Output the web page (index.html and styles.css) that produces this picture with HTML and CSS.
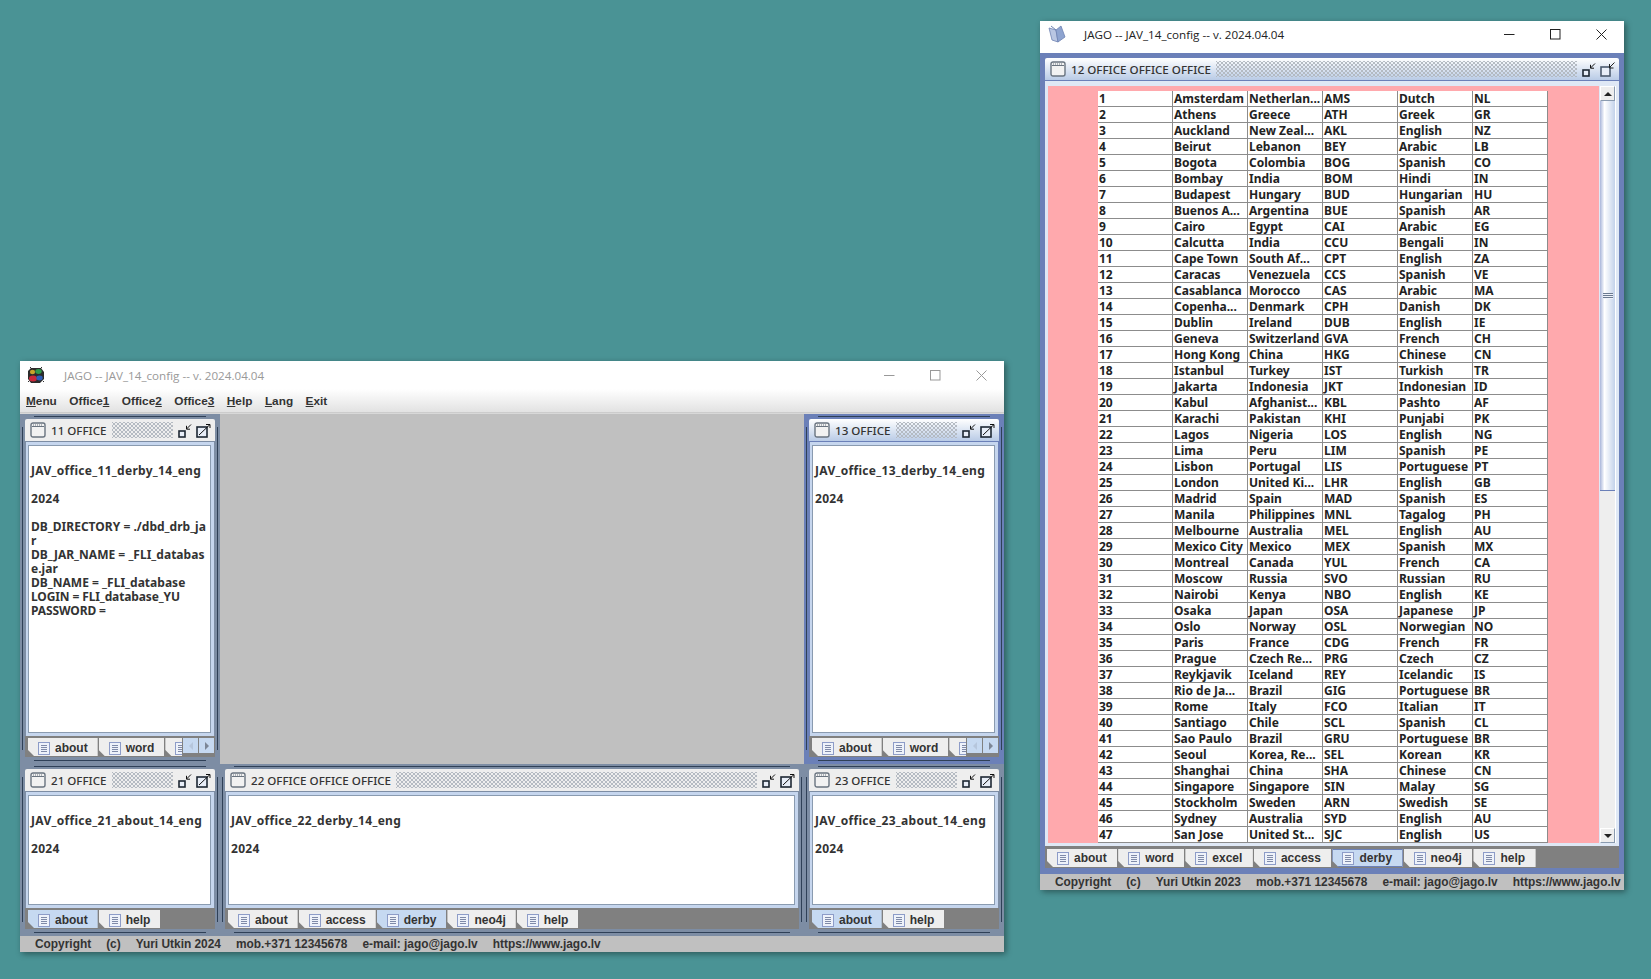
FILE: index.html
```html
<!DOCTYPE html>
<html lang="en">
<head>
<meta charset="utf-8">
<title>JAGO</title>
<link rel="stylesheet" href="styles.css">
</head>
<body>
<svg class="defs" width="0" height="0" aria-hidden="true">
  <symbol id="i-frame" viewBox="0 0 16 16"><rect x="1" y="1" width="14" height="14" rx="2" fill="#f2f2f2" stroke="#6a7480" stroke-width="1.4"/><path d="M2 4.5h12" stroke="#6a7480"/><path d="M3 3h10" stroke="#6a7480" stroke-dasharray="1 1"/></symbol>
  <symbol id="i-doc" viewBox="0 0 12 13"><rect x=".5" y=".5" width="11" height="12" fill="#eef2fa" stroke="#8d9cc8"/><path d="M3 3.5h6M3 5.5h6M3 7.5h6M3 9.5h6" stroke="#7f8aa8"/></symbol>
  <symbol id="i-min" viewBox="0 0 14 15"><rect x="1" y="8" width="6" height="6" fill="#e8eef8" stroke="#1d2733" stroke-width="1.6"/><path d="M13 1.5 8.5 6M8.5 2.8V6.2H12" fill="none" stroke="#111"/></symbol>
  <symbol id="i-max" viewBox="0 0 15 15"><rect x="1" y="4" width="10" height="10" fill="#e8eef8" stroke="#1d2733" stroke-width="1.6"/><path d="M3 12 14 1.5M10 1.5h4V5" fill="none" stroke="#111"/></symbol>
  <symbol id="i-rest" viewBox="0 0 15 15"><rect x="1" y="5" width="9" height="9" fill="#e8eef8" stroke="#4c5a6e" stroke-width="1.6"/><path d="M14.5 .5 9.5 5.5M9.5 2V6H13.5" fill="none" stroke="#222"/></symbol>
</svg>

<section class="window win-left">
  <header class="oshead oshead-dim">
    <svg class="appicon" width="18" height="18" viewBox="0 0 18 18"><path d="M4 2h10l3 4v7l-4 4H4l-3-4V5z" fill="#2b2b2b"/><ellipse cx="6" cy="12.5" rx="4" ry="3" fill="#c9283a"/><ellipse cx="12.5" cy="12" rx="3.2" ry="2.4" fill="#2e5db8"/><ellipse cx="11.5" cy="5.5" rx="3.2" ry="2.4" fill="#2f9a4a"/><ellipse cx="5.5" cy="6" rx="2.6" ry="2.2" fill="#c9a42a"/><path d="M3 1h1v1H3zM14 1h1v1h-1zM16 15h1v1h-1zM1 15h1v1H1z" fill="#333"/></svg>
    <span class="ostitle">JAGO -- JAV_14_config -- v. 2024.04.04</span>
    <span class="oscontrols">
      <svg width="11" height="11" viewBox="0 0 11 11"><path d="M0 5.5h10.5" stroke="currentColor"/></svg>
      <svg width="11" height="11" viewBox="0 0 11 11"><rect x=".5" y=".5" width="9.5" height="9.5" fill="none" stroke="currentColor"/></svg>
      <svg width="11" height="11" viewBox="0 0 11 11"><path d="M.5.5l10 10M10.5.5l-10 10" stroke="currentColor"/></svg>
    </span>
  </header>
  <nav class="menubar">
    <span><u>M</u>enu</span><span>Office<u>1</u></span><span>Office<u>2</u></span><span>Office<u>3</u></span><span><u>H</u>elp</span><span><u>L</u>ang</span><span><u>E</u>xit</span>
  </nav>
  <div class="desk">
    <article class="frame f-a">
      <div class="ftitle"><svg class="ficon"><use href="#i-frame"/></svg><span class="fname">11 OFFICE</span><span class="dots"></span><svg class="fbtn"><use href="#i-min"/></svg><svg class="fbtn"><use href="#i-max"/></svg></div>
      <div class="panel"><div class="textbox">JAV_office_11_derby_14_eng<br><br>2024<br><br><span class="caps">DB_DIRECTORY = ./dbd_drb_ja<br>r<br>DB_JAR_NAME = _FLI_databas<br>e.jar<br>DB_NAME = _FLI_database</span><br><span class="caps-x">LOGIN = FLI_database_YU<br>PASSWORD =</span></div></div>
      <div class="tabs"><div class="tabstrip"><span class="tab"><svg class="docicon"><use href="#i-doc"/></svg>about</span><span class="tab"><svg class="docicon"><use href="#i-doc"/></svg>word</span><span class="tab"><svg class="docicon"><use href="#i-doc"/></svg></span></div><span class="scrollbtn"><i class="arrow-l"></i></span><span class="scrollbtn"><i class="arrow-r"></i></span></div>
    </article>
    <article class="frame f-a f-active f-col3">
      <div class="ftitle"><svg class="ficon"><use href="#i-frame"/></svg><span class="fname">13 OFFICE</span><span class="dots"></span><svg class="fbtn"><use href="#i-min"/></svg><svg class="fbtn"><use href="#i-max"/></svg></div>
      <div class="panel"><div class="textbox">JAV_office_13_derby_14_eng<br><br>2024</div></div>
      <div class="tabs"><div class="tabstrip"><span class="tab"><svg class="docicon"><use href="#i-doc"/></svg>about</span><span class="tab"><svg class="docicon"><use href="#i-doc"/></svg>word</span><span class="tab"><svg class="docicon"><use href="#i-doc"/></svg></span></div><span class="scrollbtn"><i class="arrow-l"></i></span><span class="scrollbtn"><i class="arrow-r"></i></span></div>
    </article>
    <article class="frame">
      <div class="ftitle"><svg class="ficon"><use href="#i-frame"/></svg><span class="fname">21 OFFICE</span><span class="dots"></span><svg class="fbtn"><use href="#i-min"/></svg><svg class="fbtn"><use href="#i-max"/></svg></div>
      <div class="panel"><div class="textbox">JAV_office_21_about_14_eng<br><br>2024</div></div>
      <div class="tabs"><div class="tabstrip"><span class="tab sel"><svg class="docicon"><use href="#i-doc"/></svg>about</span><span class="tab"><svg class="docicon"><use href="#i-doc"/></svg>help</span></div></div>
    </article>
    <article class="frame">
      <div class="ftitle"><svg class="ficon"><use href="#i-frame"/></svg><span class="fname">22 OFFICE OFFICE OFFICE</span><span class="dots"></span><svg class="fbtn"><use href="#i-min"/></svg><svg class="fbtn"><use href="#i-max"/></svg></div>
      <div class="panel"><div class="textbox">JAV_office_22_derby_14_eng<br><br>2024</div></div>
      <div class="tabs"><div class="tabstrip"><span class="tab"><svg class="docicon"><use href="#i-doc"/></svg>about</span><span class="tab"><svg class="docicon"><use href="#i-doc"/></svg>access</span><span class="tab sel"><svg class="docicon"><use href="#i-doc"/></svg>derby</span><span class="tab"><svg class="docicon"><use href="#i-doc"/></svg>neo4j</span><span class="tab"><svg class="docicon"><use href="#i-doc"/></svg>help</span></div></div>
    </article>
    <article class="frame">
      <div class="ftitle"><svg class="ficon"><use href="#i-frame"/></svg><span class="fname">23 OFFICE</span><span class="dots"></span><svg class="fbtn"><use href="#i-min"/></svg><svg class="fbtn"><use href="#i-max"/></svg></div>
      <div class="panel"><div class="textbox">JAV_office_23_about_14_eng<br><br>2024</div></div>
      <div class="tabs"><div class="tabstrip"><span class="tab sel"><svg class="docicon"><use href="#i-doc"/></svg>about</span><span class="tab"><svg class="docicon"><use href="#i-doc"/></svg>help</span></div></div>
    </article>
  </div>
  <footer class="status"><span>Copyright</span><span>(c)</span><span>Yuri Utkin 2024</span><span>mob.+371 12345678</span><span>e-mail: jago@jago.lv</span><span>https://www.jago.lv</span></footer>
</section>

<section class="window win-right">
  <header class="oshead oshead-right">
    <svg class="appicon book" width="18" height="18" viewBox="0 0 18 18"><path d="M1 3l7 2 2 12-6-2z" fill="#b9c6e2" stroke="#6f83b2" stroke-width=".8"/><path d="M8 5l5-4 4 11-7 5z" fill="#8ea4d0" stroke="#6f83b2" stroke-width=".8"/><path d="M3 1l5 4" stroke="#6f83b2"/></svg>
    <span class="ostitle">JAGO -- JAV_14_config -- v. 2024.04.04</span>
    <span class="oscontrols">
      <svg width="11" height="11" viewBox="0 0 11 11"><path d="M0 5.5h10.5" stroke="currentColor"/></svg>
      <svg width="11" height="11" viewBox="0 0 11 11"><rect x=".5" y=".5" width="9.5" height="9.5" fill="none" stroke="currentColor"/></svg>
      <svg width="11" height="11" viewBox="0 0 11 11"><path d="M.5.5l10 10M10.5.5l-10 10" stroke="currentColor"/></svg>
    </span>
  </header>
  <div class="bigframe">
    <div class="ftitle ftitle-big"><svg class="ficon"><use href="#i-frame"/></svg><span class="fname">12 OFFICE OFFICE OFFICE</span><span class="dots"></span><svg class="fbtn"><use href="#i-min"/></svg><svg class="fbtn"><use href="#i-rest"/></svg></div>
    <div class="bigpanel">
      <div class="pink">
        <table class="cities">
          <tr><td>1</td><td>Amsterdam</td><td>Netherlan...</td><td>AMS</td><td>Dutch</td><td>NL</td></tr>
          <tr><td>2</td><td>Athens</td><td>Greece</td><td>ATH</td><td>Greek</td><td>GR</td></tr>
          <tr><td>3</td><td>Auckland</td><td>New Zeal...</td><td>AKL</td><td>English</td><td>NZ</td></tr>
          <tr><td>4</td><td>Beirut</td><td>Lebanon</td><td>BEY</td><td>Arabic</td><td>LB</td></tr>
          <tr><td>5</td><td>Bogota</td><td>Colombia</td><td>BOG</td><td>Spanish</td><td>CO</td></tr>
          <tr><td>6</td><td>Bombay</td><td>India</td><td>BOM</td><td>Hindi</td><td>IN</td></tr>
          <tr><td>7</td><td>Budapest</td><td>Hungary</td><td>BUD</td><td>Hungarian</td><td>HU</td></tr>
          <tr><td>8</td><td>Buenos A...</td><td>Argentina</td><td>BUE</td><td>Spanish</td><td>AR</td></tr>
          <tr><td>9</td><td>Cairo</td><td>Egypt</td><td>CAI</td><td>Arabic</td><td>EG</td></tr>
          <tr><td>10</td><td>Calcutta</td><td>India</td><td>CCU</td><td>Bengali</td><td>IN</td></tr>
          <tr><td>11</td><td>Cape Town</td><td>South Af...</td><td>CPT</td><td>English</td><td>ZA</td></tr>
          <tr><td>12</td><td>Caracas</td><td>Venezuela</td><td>CCS</td><td>Spanish</td><td>VE</td></tr>
          <tr><td>13</td><td>Casablanca</td><td>Morocco</td><td>CAS</td><td>Arabic</td><td>MA</td></tr>
          <tr><td>14</td><td>Copenha...</td><td>Denmark</td><td>CPH</td><td>Danish</td><td>DK</td></tr>
          <tr><td>15</td><td>Dublin</td><td>Ireland</td><td>DUB</td><td>English</td><td>IE</td></tr>
          <tr><td>16</td><td>Geneva</td><td>Switzerland</td><td>GVA</td><td>French</td><td>CH</td></tr>
          <tr><td>17</td><td>Hong Kong</td><td>China</td><td>HKG</td><td>Chinese</td><td>CN</td></tr>
          <tr><td>18</td><td>Istanbul</td><td>Turkey</td><td>IST</td><td>Turkish</td><td>TR</td></tr>
          <tr><td>19</td><td>Jakarta</td><td>Indonesia</td><td>JKT</td><td>Indonesian</td><td>ID</td></tr>
          <tr><td>20</td><td>Kabul</td><td>Afghanist...</td><td>KBL</td><td>Pashto</td><td>AF</td></tr>
          <tr><td>21</td><td>Karachi</td><td>Pakistan</td><td>KHI</td><td>Punjabi</td><td>PK</td></tr>
          <tr><td>22</td><td>Lagos</td><td>Nigeria</td><td>LOS</td><td>English</td><td>NG</td></tr>
          <tr><td>23</td><td>Lima</td><td>Peru</td><td>LIM</td><td>Spanish</td><td>PE</td></tr>
          <tr><td>24</td><td>Lisbon</td><td>Portugal</td><td>LIS</td><td>Portuguese</td><td>PT</td></tr>
          <tr><td>25</td><td>London</td><td>United Ki...</td><td>LHR</td><td>English</td><td>GB</td></tr>
          <tr><td>26</td><td>Madrid</td><td>Spain</td><td>MAD</td><td>Spanish</td><td>ES</td></tr>
          <tr><td>27</td><td>Manila</td><td>Philippines</td><td>MNL</td><td>Tagalog</td><td>PH</td></tr>
          <tr><td>28</td><td>Melbourne</td><td>Australia</td><td>MEL</td><td>English</td><td>AU</td></tr>
          <tr><td>29</td><td>Mexico City</td><td>Mexico</td><td>MEX</td><td>Spanish</td><td>MX</td></tr>
          <tr><td>30</td><td>Montreal</td><td>Canada</td><td>YUL</td><td>French</td><td>CA</td></tr>
          <tr><td>31</td><td>Moscow</td><td>Russia</td><td>SVO</td><td>Russian</td><td>RU</td></tr>
          <tr><td>32</td><td>Nairobi</td><td>Kenya</td><td>NBO</td><td>English</td><td>KE</td></tr>
          <tr><td>33</td><td>Osaka</td><td>Japan</td><td>OSA</td><td>Japanese</td><td>JP</td></tr>
          <tr><td>34</td><td>Oslo</td><td>Norway</td><td>OSL</td><td>Norwegian</td><td>NO</td></tr>
          <tr><td>35</td><td>Paris</td><td>France</td><td>CDG</td><td>French</td><td>FR</td></tr>
          <tr><td>36</td><td>Prague</td><td>Czech Re...</td><td>PRG</td><td>Czech</td><td>CZ</td></tr>
          <tr><td>37</td><td>Reykjavik</td><td>Iceland</td><td>REY</td><td>Icelandic</td><td>IS</td></tr>
          <tr><td>38</td><td>Rio de Ja...</td><td>Brazil</td><td>GIG</td><td>Portuguese</td><td>BR</td></tr>
          <tr><td>39</td><td>Rome</td><td>Italy</td><td>FCO</td><td>Italian</td><td>IT</td></tr>
          <tr><td>40</td><td>Santiago</td><td>Chile</td><td>SCL</td><td>Spanish</td><td>CL</td></tr>
          <tr><td>41</td><td>Sao Paulo</td><td>Brazil</td><td>GRU</td><td>Portuguese</td><td>BR</td></tr>
          <tr><td>42</td><td>Seoul</td><td>Korea, Re...</td><td>SEL</td><td>Korean</td><td>KR</td></tr>
          <tr><td>43</td><td>Shanghai</td><td>China</td><td>SHA</td><td>Chinese</td><td>CN</td></tr>
          <tr><td>44</td><td>Singapore</td><td>Singapore</td><td>SIN</td><td>Malay</td><td>SG</td></tr>
          <tr><td>45</td><td>Stockholm</td><td>Sweden</td><td>ARN</td><td>Swedish</td><td>SE</td></tr>
          <tr><td>46</td><td>Sydney</td><td>Australia</td><td>SYD</td><td>English</td><td>AU</td></tr>
          <tr><td>47</td><td>San Jose</td><td>United St...</td><td>SJC</td><td>English</td><td>US</td></tr>
        </table>
      </div>
      <div class="vscroll">
        <span class="vbtn"><i class="arrow-u"></i></span>
        <div class="vtrack"><div class="vthumb"><i class="grip"></i></div></div>
        <span class="vbtn"><i class="arrow-d"></i></span>
      </div>
    </div>
    <div class="tabs tabs-big"><div class="tabstrip"><span class="tab"><svg class="docicon"><use href="#i-doc"/></svg>about</span><span class="tab"><svg class="docicon"><use href="#i-doc"/></svg>word</span><span class="tab"><svg class="docicon"><use href="#i-doc"/></svg>excel</span><span class="tab"><svg class="docicon"><use href="#i-doc"/></svg>access</span><span class="tab sel sel-box"><svg class="docicon"><use href="#i-doc"/></svg>derby</span><span class="tab"><svg class="docicon"><use href="#i-doc"/></svg>neo4j</span><span class="tab"><svg class="docicon"><use href="#i-doc"/></svg>help</span></div></div>
  </div>
  <footer class="status"><span>Copyright</span><span>(c)</span><span>Yuri Utkin 2023</span><span>mob.+371 12345678</span><span>e-mail: jago@jago.lv</span><span>https://www.jago.lv</span></footer>
</section>
</body>
</html>
```
FILE: styles.css
```css
* { box-sizing: border-box; }
html, body { margin: 0; height: 979px; overflow: hidden; }
body { background: #4a9395; position: relative; font-family: "Liberation Sans", Arial, sans-serif; font-size: 12px; color: #333; }
.defs { position: absolute; }

.window { position: absolute; display: flex; flex-direction: column; box-shadow: 2px 2px 6px rgba(0,0,0,.4); }
.win-left { left: 20px; top: 361px; width: 984px; height: 591px; background: #d8d8d8; }
.win-right { left: 1040px; top: 21px; width: 584px; height: 869px; }

.oshead { height: 28px; background: #fff; display: flex; align-items: center; flex: none; color: #222; }
.oshead-dim { color: #999; }
.oshead-right { height: 32px; padding-bottom: 6px; }
.appicon { margin-left: 7px; flex: none; }
.book { margin-left: 8px; }
.ostitle { margin-left: 19px; font-family: "Open Sans", sans-serif; font-size: 11.65px; white-space: nowrap; }
.oshead-right .ostitle { margin-left: 18px; }
.oscontrols { margin-left: auto; margin-right: 17px; display: flex; gap: 35px; }

.menubar { height: 24px; flex: none; display: flex; gap: 12.5px; align-items: center; padding: 0 0 0 6px; background: linear-gradient(#fff, #e2e2e2); font-weight: bold; font-size: 11.8px; color: #333; border-bottom: 1px solid #ccc; }
.menubar span { white-space: nowrap; }

.desk { flex: 1; display: grid; grid-template-columns: 200px 1fr 200px; grid-template-rows: 350px 172px; background: #c0c0c0; margin-top: 1px; }
.f-col3 { grid-column: 3; }

.frame {
  --edge: #7d8da4;
  --line: #2f4057;
  display: flex; flex-direction: column; padding: 5px 5px 7px 5px;
  background:
    linear-gradient(var(--line), var(--line)) center 2px / calc(100% - 28px) 1px no-repeat,
    linear-gradient(var(--line), var(--line)) center calc(100% - 3px) / calc(100% - 28px) 1px no-repeat,
    linear-gradient(var(--line), var(--line)) 2px 13px / 1px calc(100% - 27px) no-repeat,
    linear-gradient(var(--line), var(--line)) calc(100% - 2px) 13px / 1px calc(100% - 27px) no-repeat,
    var(--edge);
}
.f-active { --edge: #6b80b8; }
.f-active .ftitle { background: linear-gradient(#fff, #b9cbe6); }

.ftitle { height: 22px; flex: none; display: flex; align-items: center; background: #eeeeee; border-radius: 2px 2px 0 0; padding: 0 4px 0 5px; margin-bottom: 1px; }
.ficon { width: 16px; height: 16px; flex: none; }
.fname { margin-left: 5px; font-family: "Noto Sans", sans-serif; font-weight: 500; font-size: 11.6px; white-space: nowrap; color: #333; }
.dots {
  flex: 1; height: 16px; margin: 0 1px 0 5px;
  background:
    radial-gradient(circle, #b3b9c1 .7px, transparent .9px) 0 0 / 4px 4px,
    radial-gradient(circle, #b3b9c1 .7px, transparent .9px) 2px 2px / 4px 4px;
}
.fbtn { width: 14px; height: 15px; flex: none; margin-left: 4px; }
.fbtn:last-child { width: 15px; }

.panel { flex: 1; min-height: 0; background: #c6d6ee; padding: 3px 3px 3px 2px; margin: 0 1px; }
.textbox { height: 100%; background: #fff; border: 1px solid #8a9bb0; padding: 18px 2px 0; font-family: "Noto Sans", sans-serif; font-weight: 700; font-size: 12px; letter-spacing: .3px; line-height: 14px; color: #333; white-space: nowrap; overflow: hidden; }
.caps { letter-spacing: .02px; }
.caps-x { letter-spacing: -.12px; }

.tabs { height: 21px; flex: none; display: flex; background: #808080; padding: 2px 1px 1px 3px; }
.tabstrip { flex: 1; min-width: 0; display: flex; gap: 1px; overflow: hidden; }
.tab { flex: none; display: flex; align-items: center; height: 18px; padding: 2px 10px 0; font-weight: bold; color: #333; background: #eeeeee; white-space: nowrap; clip-path: polygon(0 0, 100% 0, 100% 100%, 6px 100%, 0 calc(100% - 6px)); }
.tab.sel { background: #c6d9f1; }
.sel-box { box-shadow: inset 0 0 0 1px #6b80b8; }
.docicon { width: 12px; height: 13px; margin-right: 5px; flex: none; }
.scrollbtn { width: 15px; height: 15px; flex: none; background: #c6d9f1; display: flex; align-items: center; justify-content: center; margin-left: 1px; }
.arrow-l, .arrow-r, .arrow-u, .arrow-d { display: block; width: 0; height: 0; border-style: solid; border-color: transparent; }
.arrow-l { border-width: 4px 4px 4px 0; border-right-color: #b6c6dc; }
.arrow-r { border-width: 4px 0 4px 4px; border-left-color: #7c8696; }
.arrow-u { border-width: 0 4px 4px; border-bottom-color: #222; }
.arrow-d { border-width: 4px 4px 0; border-top-color: #222; }

.status { flex: none; height: 16px; background: #c0c0c0; display: flex; gap: 15px; align-items: center; padding-left: 15px; font-weight: bold; font-size: 11.9px; color: #333; white-space: nowrap; }

.bigframe { flex: 1; min-height: 0; display: flex; flex-direction: column; background: #6b80b8; padding: 5px 5px 6px; }
.ftitle-big { background: linear-gradient(#fff, #b9cbe6); }
.bigpanel { flex: 1; min-height: 0; display: flex; background: #dfe8f5; padding: 5px 3px 3px 3px; }
.pink { flex: 1; background: #ffa9ad; padding: 5px 0 0 50px; }
.cities { border-collapse: separate; border-spacing: 0; table-layout: fixed; width: 450px; background: #fff; font-family: "Noto Sans", sans-serif; font-weight: 700; font-size: 12px; color: #222; }
.cities td { width: 75px; height: 16px; padding: 0 0 0 1px; line-height: 15px; border-right: 1px solid #8c8c8c; border-bottom: 1px solid #8c8c8c; overflow: hidden; white-space: nowrap; }
.vscroll { width: 16px; flex: none; margin-left: 1px; display: flex; flex-direction: column; background: #eeeeee; border-right: 1px solid #fff; }
.vbtn { height: 15px; flex: none; display: flex; align-items: center; justify-content: center; background: #eeeeee; border: 1px solid #fff; border-right-color: #8a9bb0; border-bottom-color: #8a9bb0; }
.vtrack { flex: 1; min-height: 0; display: flex; flex-direction: column; }
.vthumb { height: 390px; background: linear-gradient(90deg, #a9b6da, #fff 30%, #c3d2ea); border-bottom: 1px solid #6b80b8; display: flex; justify-content: center; padding-top: 192px; }
.grip { display: block; width: 10px; height: 6px; background: repeating-linear-gradient(#6b7a90 0 1px, #eef2fa 1px 2px); }

.tabs-big { height: 22px; padding: 3px 0 1px 2px; }
.tabs-big .tab { padding: 0 10.5px 0 10px; }
```
